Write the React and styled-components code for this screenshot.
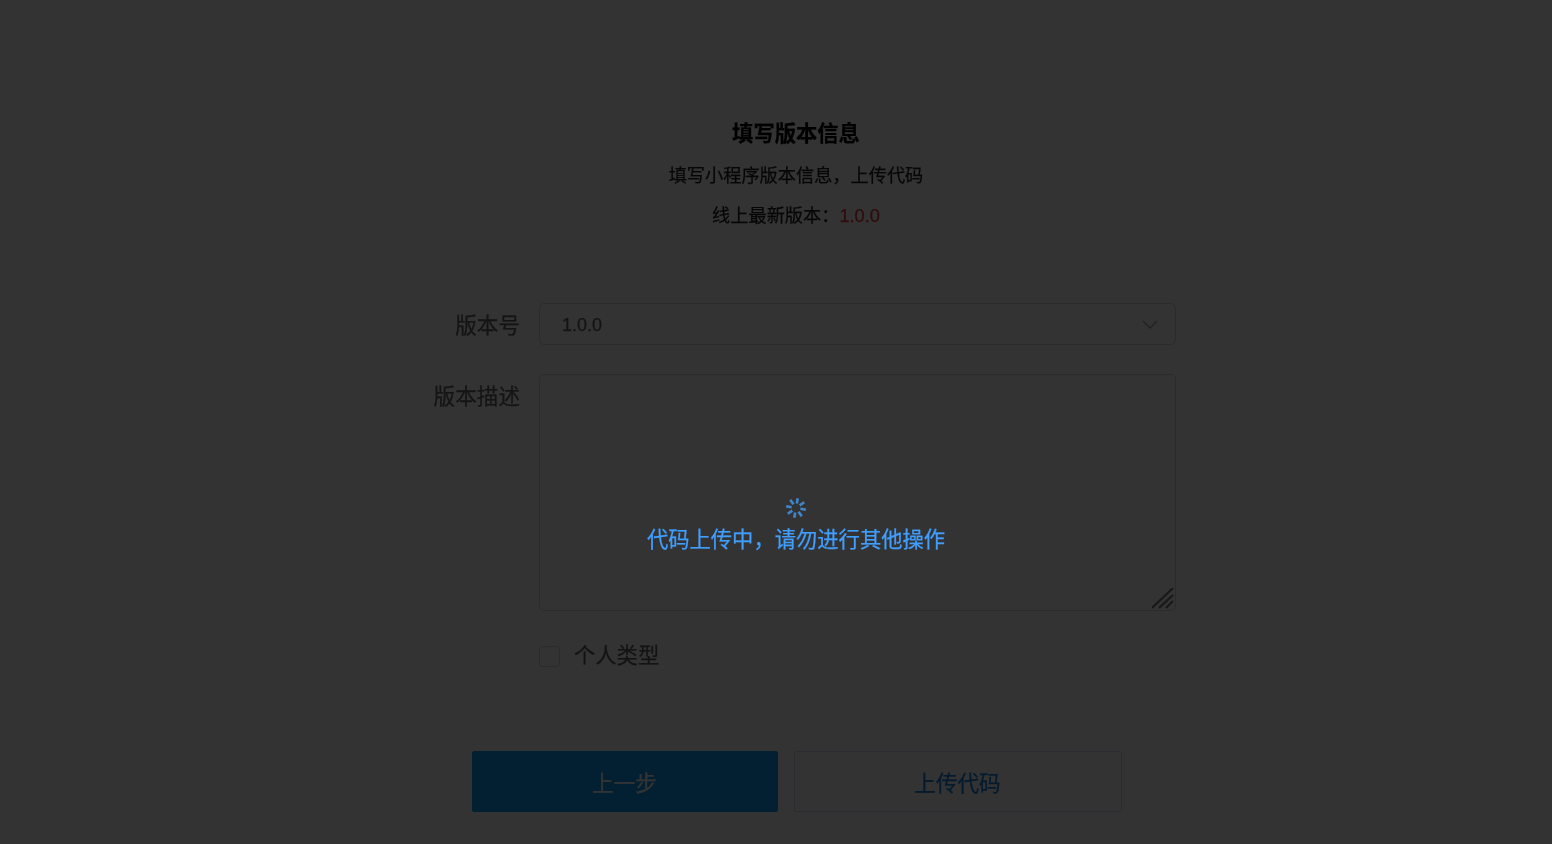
import React from "react";
import styled, { createGlobalStyle } from "styled-components";

const GlobalStyle = createGlobalStyle`
  html, body {
    margin: 0;
    height: 100%;
    overflow: hidden;
    background: #fff;
    font-family: "Liberation Sans", "Noto Sans CJK SC", sans-serif;
  }
  * {
    box-sizing: border-box;
  }
`;

const Page = styled.div`
  height: 844px;
  padding: 120px 0 0 40px;
  display: flex;
  flex-direction: column;
  align-items: center;
  filter: blur(0.4px);
  -webkit-text-stroke: 0.25px currentColor;
`;

const Header = styled.div`
  display: flex;
  flex-direction: column;
  align-items: center;
`;

const Title = styled.h2`
  margin: 0;
  font-size: 21.3px;
  line-height: 28px;
  font-weight: 700;
  color: #000;
`;

const SubText = styled.p`
  margin: ${({ $top }) => $top}px 0 0;
  font-size: 18.2px;
  line-height: 26px;
  color: #222;
`;

const Version = styled.span`
  color: #e83a3a;
`;

const Form = styled.div`
  width: 760px;
  margin-top: 74px;
  display: flex;
  flex-direction: column;
`;

const Row = styled.div`
  display: flex;
  margin-bottom: ${({ $gap }) => $gap}px;
`;

const Label = styled.label`
  width: 123px;
  height: 42px;
  padding-right: 19px;
  flex-shrink: 0;
  text-align: right;
  font-size: 21.6px;
  line-height: 46px;
  color: #666;
`;

const SelectBox = styled.div`
  flex: 1;
  height: 42px;
  padding: 2px 17px 0 22px;
  display: flex;
  align-items: center;
  justify-content: space-between;
  border: 1px solid #d4d7de;
  border-radius: 5px;
  font-size: 18px;
  color: #606266;
`;

const Chevron = styled.svg`
  margin-top: -2px;
`;

const AreaWrap = styled.div`
  position: relative;
  flex: 1;
  height: 237px;
`;

const Area = styled.textarea`
  display: block;
  width: 100%;
  height: 100%;
  border: 1px solid #d4d7de;
  border-radius: 5px;
  background: transparent;
  resize: none;
  outline: none;
`;

const Grip = styled.svg`
  position: absolute;
  right: 2px;
  bottom: 2px;
`;

const CheckRow = styled.div`
  margin-left: 123px;
  padding-top: 1px;
  display: flex;
  align-items: center;
  gap: 14px;
  font-size: 21.3px;
  line-height: 30px;
  color: #606266;
`;

const CheckBox = styled.span`
  width: 21px;
  height: 21px;
  border: 1px solid #d4d7de;
  border-radius: 3px;
`;

const Buttons = styled.div`
  margin: 80px 0 0 1px;
  display: flex;
  gap: 16px;
`;

const Button = styled.button`
  width: ${({ $w }) => $w}px;
  height: 61px;
  padding: 0;
  border: 1px solid ${({ $primary }) => ($primary ? "#0a9ef5" : "#cddcf0")};
  border-radius: 2px;
  background: ${({ $primary }) => ($primary ? "#0a9ef5" : "#fff")};
  color: ${({ $primary }) => ($primary ? "#fff" : "#1580e0")};
  font-family: inherit;
  font-size: 21.6px;
  -webkit-text-stroke: inherit;
`;

const Mask = styled.div`
  position: fixed;
  inset: 0;
  padding: 496px 0 0 40px;
  background: rgba(0, 0, 0, 0.8);
  display: flex;
  flex-direction: column;
  align-items: center;
  color: #409eff;
`;

const LoadText = styled.p`
  margin: 5px 0 0;
  font-size: 21.3px;
  line-height: 30px;
  filter: blur(0.3px);
  -webkit-text-stroke: 0.25px currentColor;
`;

function Spinner() {
  const spokes = [0, 45, 90, 135, 180, 225, 270, 315];
  return (
    <svg width="24" height="24" viewBox="0 0 24 24" fill="none" stroke="#3f86cc" strokeWidth="2.6">
      {spokes.map((a) => (
        <line key={a} x1="12" y1="2" x2="12" y2="7.5" transform={`rotate(${a + 10} 12 12)`} />
      ))}
    </svg>
  );
}

export default function App() {
  return (
    <>
      <GlobalStyle />
      <Page>
        <Header>
          <Title>填写版本信息</Title>
          <SubText $top={15}>填写小程序版本信息，上传代码</SubText>
          <SubText $top={14}>
            线上最新版本：<Version>1.0.0</Version>
          </SubText>
        </Header>
        <Form>
          <Row $gap={29}>
            <Label>版本号</Label>
            <SelectBox>
              1.0.0
              <Chevron width="16" height="9" viewBox="0 0 16 9" fill="none" stroke="#a8abb2" strokeWidth="1.5">
                <path d="M1 1l7 7 7-7" />
              </Chevron>
            </SelectBox>
          </Row>
          <Row $gap={29}>
            <Label>版本描述</Label>
            <AreaWrap>
              <Area />
              <Grip width="22" height="21" viewBox="0 0 22 21" stroke="#777" strokeWidth="2.2">
                <path d="M0 20L21 0M7 20L21 7M14 20L21 13" />
              </Grip>
            </AreaWrap>
          </Row>
          <CheckRow>
            <CheckBox />
            个人类型
          </CheckRow>
        </Form>
        <Buttons>
          <Button $primary $w={306}>上一步</Button>
          <Button $w={328}>上传代码</Button>
        </Buttons>
      </Page>
      <Mask>
        <Spinner />
        <LoadText>代码上传中，请勿进行其他操作</LoadText>
      </Mask>
    </>
  );
}
